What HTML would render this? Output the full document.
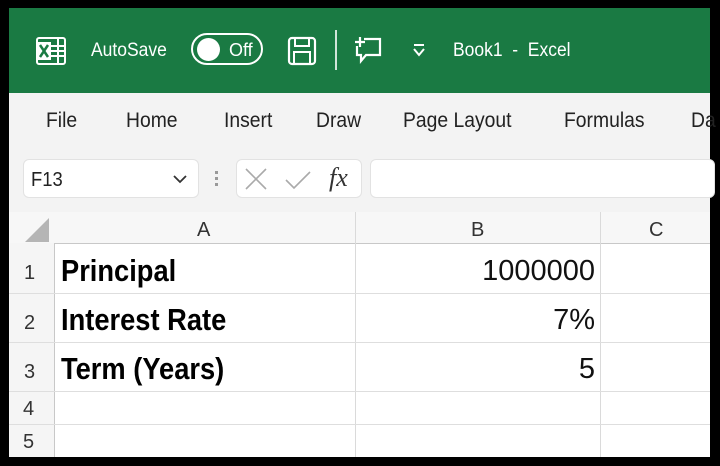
<!DOCTYPE html><html><head><style>
body{margin:0;width:720px;height:466px;background:#000;position:relative;overflow:hidden;font-family:"Liberation Sans",sans-serif}
.a{position:absolute}
.w{color:#fff;font-size:19px;white-space:nowrap}
.t{font-size:21px;color:#222;white-space:nowrap;transform:scaleX(.92);transform-origin:left}
.h{font-size:20px;color:#333}
.b{font-weight:bold;font-size:31px;color:#000;white-space:nowrap;transform:scaleX(.88);transform-origin:left}
.n{font-size:29px;color:#111;text-align:right;white-space:nowrap}
</style></head><body>
<div class="a" style="left:9px;top:8px;width:701px;height:449px;background:#fff"></div>
<div class="a" style="left:9px;top:8px;width:701px;height:85px;background:#1a7a43"></div>
<svg class="a" style="left:35px;top:36px" width="32" height="30" viewBox="0 0 32 30"><rect x="2" y="2" width="28" height="26" rx="2" fill="none" stroke="#fff" stroke-width="2"/><rect x="2" y="6" width="14" height="18" fill="#fff"/><path d="M5 9l8 12M13 9l-8 12" stroke="#1a7a43" stroke-width="2.5"/><path d="M16 10h14M16 15h14M16 20h14M23 2v26" stroke="#fff" stroke-width="2"/></svg>
<div class="a w" style="left:91px;top:40px;transform:scaleX(.92);transform-origin:left">AutoSave</div>
<div class="a" style="left:191px;top:33px;width:72px;height:32px;border:2px solid #fff;border-radius:18px;box-sizing:border-box"></div>
<div class="a" style="left:197px;top:38px;width:23px;height:23px;border-radius:50%;background:#fff"></div>
<div class="a w" style="left:229px;top:40px;font-size:18px">Off</div>
<svg class="a" style="left:287px;top:36px" width="30" height="30" viewBox="0 0 30 30"><rect x="2" y="2" width="26" height="26" rx="3" fill="none" stroke="#fff" stroke-width="2.2"/><rect x="8" y="2" width="14" height="8" fill="none" stroke="#fff" stroke-width="2"/><rect x="7" y="16" width="16" height="12" fill="none" stroke="#fff" stroke-width="2"/></svg>
<div class="a" style="left:335px;top:30px;width:2px;height:40px;background:#fff;opacity:.8"></div>
<svg class="a" style="left:353px;top:34px" width="30" height="32" viewBox="0 0 30 32"><path d="M11 5h16v16H13l-5 6v-6H4V12" fill="none" stroke="#fff" stroke-width="2.2"/><path d="M7 3v10M2 8h10" stroke="#fff" stroke-width="2.2"/></svg>
<svg class="a" style="left:412px;top:42px" width="14" height="16" viewBox="0 0 14 16"><path d="M2 3h10" stroke="#fff" stroke-width="2"/><path d="M2 7l5 6 5-6" fill="none" stroke="#fff" stroke-width="2"/></svg>
<div class="a w" style="left:453px;top:40px;transform:scaleX(.92);transform-origin:left">Book1&nbsp; - &nbsp;Excel</div>
<div class="a" style="left:9px;top:93px;width:701px;height:53px;background:#f3f3f3"></div>
<div class="a t" style="left:46px;top:109px">File</div>
<div class="a t" style="left:126px;top:109px">Home</div>
<div class="a t" style="left:224px;top:109px">Insert</div>
<div class="a t" style="left:316px;top:109px">Draw</div>
<div class="a t" style="left:403px;top:109px">Page Layout</div>
<div class="a t" style="left:564px;top:109px">Formulas</div>
<div class="a t" style="left:691px;top:109px">Da</div>
<div class="a" style="left:9px;top:146px;width:701px;height:66px;background:#f3f3f3"></div>
<div class="a" style="left:23px;top:159px;width:176px;height:39px;background:#fff;border:1px solid #e2e2e2;border-radius:6px;box-sizing:border-box"></div>
<div class="a t" style="left:31px;top:169px;font-size:20px">F13</div>
<svg class="a" style="left:173px;top:174px" width="14" height="10"><path d="M1 2l6 6 6-6" fill="none" stroke="#333" stroke-width="1.8"/></svg>
<div class="a" style="left:215px;top:171px;width:3px;height:3px;background:#999;box-shadow:0 6px #999,0 12px #999"></div>
<div class="a" style="left:236px;top:159px;width:126px;height:39px;background:#fff;border:1px solid #e2e2e2;border-radius:6px;box-sizing:border-box"></div>
<svg class="a" style="left:244px;top:167px" width="80" height="24"><path d="M2 2l20 20M22 2L2 22" stroke="#aaa" stroke-width="1.6"/><path d="M42 13l8 8 16-16" fill="none" stroke="#aaa" stroke-width="1.6"/></svg>
<div class="a" style="left:329px;top:163px;font-family:'Liberation Serif',serif;font-style:italic;font-size:26px;color:#333">fx</div>
<div class="a" style="left:370px;top:159px;width:345px;height:39px;background:#fff;border:1px solid #e2e2e2;border-radius:6px;box-sizing:border-box"></div>
<div class="a" style="left:9px;top:212px;width:701px;height:31px;background:#f7f7f7;border-bottom:1px solid #c8c8c8"></div>
<div class="a" style="left:9px;top:243px;width:45px;height:214px;background:#f5f5f5;border-right:1px solid #c8c8c8"></div>
<svg class="a" style="left:25px;top:218px" width="26" height="24"><path d="M24 0v24H0z" fill="#b5b5b5"/></svg>
<div class="a" style="left:355px;top:212px;width:1px;height:245px;background:#dadada"></div>
<div class="a" style="left:600px;top:212px;width:1px;height:245px;background:#dadada"></div>
<div class="a h" style="left:197px;top:219px">A</div>
<div class="a h" style="left:471px;top:219px">B</div>
<div class="a h" style="left:649px;top:219px">C</div>
<div class="a" style="left:9px;top:293px;width:701px;height:1px;background:#dedede"></div>
<div class="a" style="left:9px;top:342px;width:701px;height:1px;background:#dedede"></div>
<div class="a" style="left:9px;top:391px;width:701px;height:1px;background:#dedede"></div>
<div class="a" style="left:9px;top:424px;width:701px;height:1px;background:#dedede"></div>
<div class="a h" style="left:24px;top:262px">1</div>
<div class="a h" style="left:24px;top:312px">2</div>
<div class="a h" style="left:24px;top:361px">3</div>
<div class="a h" style="left:23px;top:398px">4</div>
<div class="a h" style="left:23px;top:431px">5</div>
<div class="a b" style="left:61px;top:253px">Principal</div>
<div class="a b" style="left:61px;top:302px">Interest Rate</div>
<div class="a b" style="left:61px;top:351px">Term (Years)</div>
<div class="a n" style="left:400px;width:195px;top:255px">1000000</div>
<div class="a n" style="left:400px;width:195px;top:304px">7%</div>
<div class="a n" style="left:400px;width:195px;top:353px">5</div>
</body></html>
